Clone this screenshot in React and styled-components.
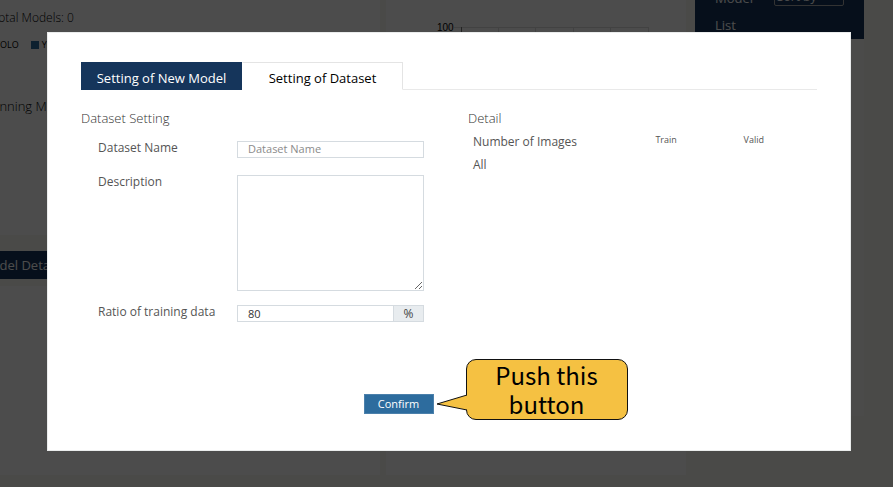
import React from "react";
import styled, { createGlobalStyle } from "styled-components";

const GlobalStyle = createGlobalStyle`
  *, *::before, *::after { box-sizing: border-box; }
  body {
    margin: 0;
    background: #f8f7f0;
    color: #333;
    font: 13px/20px "Open Sans", "Noto Sans", sans-serif;
    overflow: hidden;
  }
  h2, h3, p { margin: 0; font: inherit; }
  button, input, textarea, select { font: inherit; color: inherit; border-radius: 0; margin: 0; }
`;

/* Dashboard behind the dialog */
const Dashboard = styled.main`
  display: grid;
  grid-template-columns: 420fr 300fr 172fr;
  column-gap: 6px;
  height: 100vh;
  margin: 0 29px 0 -40px;
  padding-bottom: 12px;
`;

const Column = styled.div`
  display: flex;
  flex-direction: column;
  min-width: 0;
`;

const Panel = styled.section`
  flex: ${(p) => (p.$grow ? "1" : "none")};
  background: #fff;
`;

const Summary = styled(Panel)`
  height: 235px;
  padding: 8px 0 0 24px;
  font-weight: 300;
  color: #000;
`;

const SummaryTitle = styled.h2`
  && {
    padding-left: 8px;
    font-size: 12px;
    font-weight: 300;
  }
`;

const Legend = styled.ul`
  display: flex;
  gap: 12px;
  margin: 7px 0 41px;
  padding: 0;
  list-style: none;
  font-size: 9px;
  font-weight: 400;
`;

const LegendItem = styled.li`
  display: flex;
  align-items: center;
  gap: 3px;
  &::before {
    content: "";
    width: 8px;
    height: 8px;
    background: ${(p) => p.$color};
  }
`;

const PanelHeader = styled.h2`
  && {
    margin: 16px 0 7px;
    padding: 4px 0 4px 20px;
    font-weight: 500;
  }
  background: #15355b;
  color: #fff;
`;

const ChartPanel = styled(Panel)`
  padding: 20px 37px 0 51px;
`;

const Chart = styled.svg`
  display: block;
  width: 100%;
  height: 240px;
  font: 10px "Liberation Sans", sans-serif;
`;

const ListColumn = styled(Column)`
  margin: 0 0 59px 3px;
  background: linear-gradient(to right, transparent 92%, #fafaf9 92%);
`;

const ListHeader = styled.header`
  display: flex;
  justify-content: space-between;
  height: 39px;
  padding: 0 20px;
  background: #15355b;
  color: #fff;
`;

const ListTitle = styled.h2`
  && {
    width: 50px;
    margin-top: -15px;
    font-weight: 500;
    line-height: 27px;
  }
`;

const SortSelect = styled.select`
  width: 70px;
  height: 18px;
  margin-top: -12px;
  padding: 0 2px;
  appearance: none;
  border: 1px solid #aaa;
  border-radius: 2px;
  background: transparent;
  font-size: 12px;
  line-height: 16px;
`;

/* Dialog */
const Overlay = styled.div`
  position: fixed;
  inset: 0;
  padding: 32px 42px 36px 47px;
  background: rgba(0, 0, 0, 0.7);
`;

const Dialog = styled.div`
  padding: 30px 34px 37px;
  background: #fff;
  box-shadow: inset 0 0 0 1px #eaecec;
`;

const TabList = styled.div`
  display: flex;
  border-bottom: 1px solid #e9e9e9;
`;

const Tab = styled.button`
  width: 161px;
  height: 28px;
  margin-bottom: -1px;
  padding: 4px 0 0;
  border: 1px solid;
  border-color: ${(p) => (p.$active ? "#e4e4e4 #e4e4e4 #fff #fff" : "#15355b")};
  background: ${(p) => (p.$active ? "#fff" : "#15355b")};
  color: ${(p) => (p.$active ? "#000" : "#fff")};
  font-weight: ${(p) => (p.$active ? 400 : 500)};
  line-height: 20px;
`;

const Columns = styled.div`
  display: grid;
  grid-template-columns: repeat(2, minmax(0, 1fr));
  column-gap: 38px;
  margin-top: 18px;
`;

const SectionTitle = styled.h3`
  && { font-weight: 300; }
  color: #333;
`;

const Form = styled.form`
  padding: 10px 6px 0 17px;
`;

const Field = styled.div`
  display: grid;
  grid-template-columns: 139px minmax(0, 1fr);
  align-items: start;
  margin-bottom: ${(p) => (p.$tight ? "11px" : "14px")};
`;

const Label = styled.label`
  color: #555;
  font-size: 12px;
  line-height: 20px;
`;

const NameInput = styled.input`
  && { margin-top: 3px; }
  width: 100%;
  height: 17px;
  padding: 0 10px 2px;
  border: 1px solid #d5dbe0;
  font-size: 11px;
  line-height: 13px;
  &::placeholder { color: #8b8b8b; }
`;

const DescriptionInput = styled.textarea`
  && { margin-top: 3px; }
  display: block;
  width: 100%;
  height: 116px;
  padding: 4px 10px;
  border: 1px solid #d5dbe0;
  background: #fff;
  resize: vertical;
  font-size: 11px;
`;

const InputGroup = styled.div`
  display: flex;
  height: 17px;
  margin-top: 3px;
  border: 1px solid #d5dbe0;
`;

const RatioInput = styled.input`
  flex: 1;
  min-width: 0;
  padding: 0 10px;
  border: 0;
  font-size: 11px;
  line-height: 15px;
`;

const Unit = styled.span`
  width: 30px;
  border-left: 1px solid #d5dbe0;
  background: #e8ecef;
  color: #444;
  font-size: 12px;
  line-height: 15px;
  text-align: center;
`;

const DetailTable = styled.table`
  width: 93%;
  margin: 2px 0 0 5px;
  border-collapse: collapse;
  table-layout: fixed;
  color: #555;
  font-size: 12px;
  th { height: 23px; padding: 0; font-weight: 400; text-align: left; }
`;

const CountHead = styled.th`
  width: 27%;
  && { padding-bottom: 3px; text-align: center; }
  font-size: 9px;
`;

const Actions = styled.div`
  display: flex;
  justify-content: center;
  margin-top: 58px;
  padding-right: 101px;
`;

const Anchor = styled.div`
  position: relative;
`;

const ConfirmButton = styled.button`
  display: block;
  width: 70px;
  height: 20px;
  padding: 0;
  border: 1px solid #4b80ab;
  background: #2d6c9e;
  color: #fff;
  font-size: 11px;
  font-weight: 500;
  line-height: 18px;
`;

const Callout = styled.div`
  position: absolute;
  left: 102px;
  top: -35px;
  width: 162px;
  padding: 0 15px 1px;
  border: 1px solid #111;
  border-radius: 10px;
  background: #f5c142;
  color: #000;
  font: 400 24px/29px "Noto Sans CJK JP", sans-serif;
  text-align: center;
`;

const Tail = styled.svg`
  position: absolute;
  left: -31px;
  top: 34px;
  width: 31px;
  height: 18px;
`;

function DashboardView() {
  return (
    <Dashboard aria-hidden="true" inert>
      <Column>
        <Summary>
          <SummaryTitle>Total Models: 0</SummaryTitle>
          <Legend>
            <LegendItem $color="#15355b">YOLO</LegendItem>
            <LegendItem $color="#2d6c9e">YOLO v2</LegendItem>
          </Legend>
          <p>Running Models: 0</p>
        </Summary>
        <PanelHeader>Model Detail</PanelHeader>
        <Panel $grow />
      </Column>
      <Column>
        <ChartPanel $grow>
          <Chart>
            <text x="0" y="11">100</text>
            <path d="M17 7.5H211" stroke="#ddd" fill="none" />
            <path d="M24.500 7V240" stroke="#777" fill="none" />
            <path d="M61.500 7V240M98.500 7V240M136.500 7V240M173.500 7V240M211.500 7V240" stroke="#ddd" fill="none" />
          </Chart>
        </ChartPanel>
      </Column>
      <ListColumn>
        <ListHeader>
          <ListTitle>Model List</ListTitle>
          <SortSelect aria-label="Sort by" defaultValue="">
            <option value="">Sort by</option>
          </SortSelect>
        </ListHeader>
      </ListColumn>
    </Dashboard>
  );
}

function DatasetForm() {
  return (
    <Form id="dataset-form" onSubmit={(e) => e.preventDefault()}>
      <Field>
        <Label htmlFor="dataset-name">Dataset Name</Label>
        <NameInput id="dataset-name" placeholder="Dataset Name" />
      </Field>
      <Field $tight>
        <Label htmlFor="description">Description</Label>
        <DescriptionInput id="description" />
      </Field>
      <Field>
        <Label htmlFor="ratio">Ratio of training data</Label>
        <InputGroup>
          <RatioInput id="ratio" inputMode="numeric" defaultValue="80" />
          <Unit>%</Unit>
        </InputGroup>
      </Field>
    </Form>
  );
}

export default function App() {
  return (
    <>
      <GlobalStyle />
      <DashboardView />
      <Overlay>
        <Dialog role="dialog" aria-modal="true" aria-label="Setting of Dataset">
          <TabList role="tablist">
            <Tab role="tab" aria-selected="false">Setting of New Model</Tab>
            <Tab role="tab" aria-selected="true" $active>Setting of Dataset</Tab>
          </TabList>
          <Columns>
            <section>
              <SectionTitle>Dataset Setting</SectionTitle>
              <DatasetForm />
            </section>
            <section>
              <SectionTitle>Detail</SectionTitle>
              <DetailTable>
                <thead>
                  <tr>
                    <th scope="col">Number of Images</th>
                    <CountHead scope="col">Train</CountHead>
                    <CountHead scope="col">Valid</CountHead>
                  </tr>
                </thead>
                <tbody>
                  <tr>
                    <th scope="row">All</th>
                    <td />
                    <td />
                  </tr>
                </tbody>
              </DetailTable>
            </section>
          </Columns>
          <Actions>
            <Anchor>
              <ConfirmButton type="submit" form="dataset-form">Confirm</ConfirmButton>
              <Callout>
                <Tail viewBox="0 0 31 18" aria-hidden="true">
                  <path d="M31 1L1 10L31 16" fill="#f5c142" stroke="#111" />
                </Tail>
                Push this button
              </Callout>
            </Anchor>
          </Actions>
        </Dialog>
      </Overlay>
    </>
  );
}
